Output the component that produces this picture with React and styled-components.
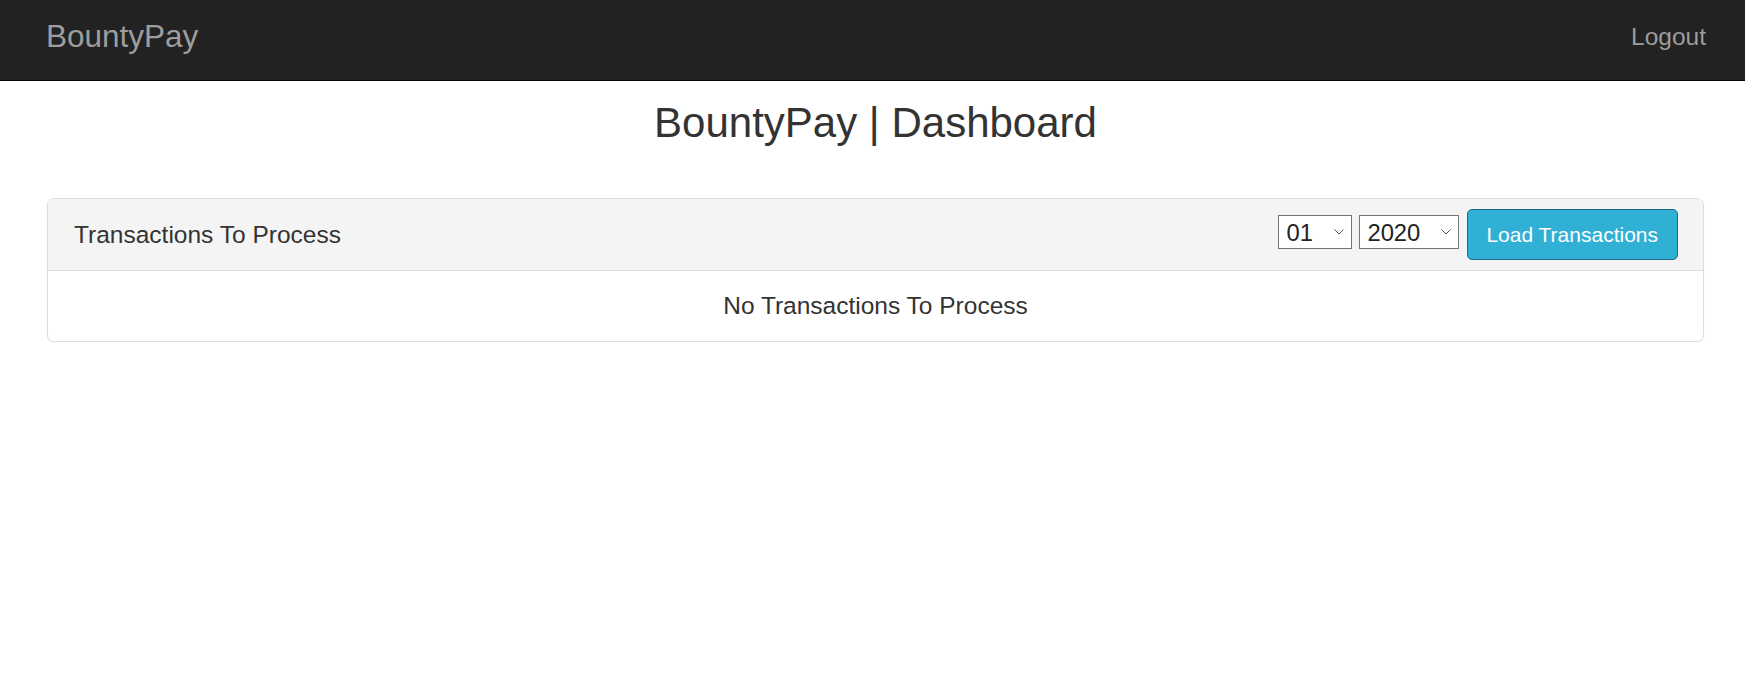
import React from "react";
import styled, { createGlobalStyle } from "styled-components";

const GlobalStyle = createGlobalStyle`
  html, body { margin: 0; padding: 0; background: #fff; }
  body {
    font-family: "Liberation Sans", Arial, Helvetica, sans-serif;
    color: #333;
  }
  * { box-sizing: border-box; }
`;

const Navbar = styled.nav`
  height: 81px;
  background: #222;
  border-bottom: 1px solid #080808;
  display: flex;
  align-items: center;
  justify-content: space-between;
  padding: 0 39px 7px 46px;
`;

const Brand = styled.a`
  font-size: 31.5px;
  color: #9d9d9d;
  text-decoration: none;
  line-height: 35px;
`;

const NavLink = styled.a`
  font-size: 24.5px;
  color: #9d9d9d;
  text-decoration: none;
  line-height: 35px;
`;

const Container = styled.main`
  padding: 0 41px 0 47px;
`;

const Title = styled.h3`
  margin: 19px 0 52px;
  font-size: 42px;
  font-weight: 400;
  line-height: 1.1;
  text-align: center;
  color: #333;
`;

const Panel = styled.section`
  border: 1px solid #ddd;
  border-radius: 7px;
  background: #fff;
  box-shadow: 0 1px 2px rgba(0, 0, 0, 0.05);
  overflow: hidden;
`;

const PanelHeading = styled.header`
  display: flex;
  align-items: center;
  justify-content: space-between;
  padding: 10px 25px 10px 26px;
  background: #f4f4f4;
  border-bottom: 1px solid #ddd;
`;

const PanelTitle = styled.span`
  font-size: 24.5px;
  line-height: 35px;
  color: #333;
`;

const Controls = styled.div`
  display: flex;
  align-items: center;
  gap: 7px;
`;

const SelectWrap = styled.div`
  position: relative;
  display: inline-flex;
  margin-top: -5px;
`;

const Select = styled.select`
  appearance: none;
  -webkit-appearance: none;
  width: ${(p) => p.$w}px;
  height: 34px;
  border: 1px solid #767676;
  border-radius: 0;
  background: #fff;
  color: #222;
  font-family: "Liberation Sans", Arial, sans-serif;
  font-size: 23.8px;
  padding: 0 0 0 7px;
  outline: none;
`;

const Chevron = styled.svg`
  position: absolute;
  right: 8px;
  top: 50%;
  margin-top: -3px;
  pointer-events: none;
`;

const Button = styled.button`
  margin-left: 1px;
  font-family: "Liberation Sans", Arial, sans-serif;
  font-size: 21px;
  line-height: 33px;
  padding: 8px 19px 8px 18px;
  color: #fff;
  background: #31b0d5;
  border: 1px solid #1b6d85;
  border-radius: 5px;
  cursor: pointer;
`;

const PanelBody = styled.div`
  padding: 17px 26px 18px;
  text-align: center;
  font-size: 24.5px;
  line-height: 35px;
  color: #333;
`;

function DropDown({ width, options }) {
  return (
    <SelectWrap>
      <Select $w={width} defaultValue={options[0]}>
        {options.map((o) => (
          <option key={o} value={o}>
            {o}
          </option>
        ))}
      </Select>
      <Chevron width="10" height="6" viewBox="0 0 10 6">
        <polyline points="0.5,0.5 5,5 9.5,0.5" fill="none" stroke="#555" strokeWidth="1" />
      </Chevron>
    </SelectWrap>
  );
}

const months = ["01", "02", "03", "04", "05", "06", "07", "08", "09", "10", "11", "12"];
const years = ["2020", "2019", "2018"];

export default function App() {
  return (
    <>
      <GlobalStyle />
      <Navbar>
        <Brand href="#">BountyPay</Brand>
        <NavLink href="#">Logout</NavLink>
      </Navbar>
      <Container>
        <Title>BountyPay | Dashboard</Title>
        <Panel>
          <PanelHeading>
            <PanelTitle>Transactions To Process</PanelTitle>
            <Controls>
              <DropDown width={74} options={months} />
              <DropDown width={100} options={years} />
              <Button>Load Transactions</Button>
            </Controls>
          </PanelHeading>
          <PanelBody>No Transactions To Process</PanelBody>
        </Panel>
      </Container>
    </>
  );
}
